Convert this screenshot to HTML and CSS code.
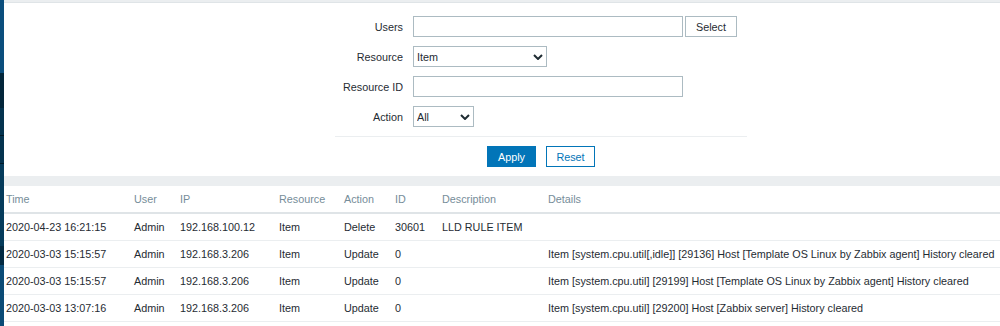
FILE: index.html
```html
<!DOCTYPE html>
<html lang="en">
<head>
    <meta charset="UTF-8">
    <meta name="viewport" content="width=device-width, initial-scale=1.0">
    <title>Audit log</title>
    <link rel="stylesheet" href="styles.css">
</head>
<body>
    <div class="page">
        <!-- visible edge of the collapsed sidebar -->
        <div class="sidebar">
            <div class="sb sb-logo"></div>
            <div class="sb sb-search"></div>
            <div class="sb sb-item"></div>
            <div class="sb sb-item"></div>
            <div class="sb sb-group"></div>
            <div class="sb sb-dark"></div>
            <div class="sb sb-active"></div>
        </div>

        <main class="content">
            <div class="filter-panel">
                <form class="filter">
                    <div class="filter-grid">
                        <label class="flabel">Users</label>
                        <div class="field">
                            <input type="text" class="text-box wide">
                            <button type="button" class="btn-alt">Select</button>
                        </div>

                        <label class="flabel">Resource</label>
                        <div class="field">
                            <span class="select-wrap res">
                                <select class="select-box">
                                    <option>Item</option>
                                </select>
                                <svg class="chevron" viewBox="0 0 10 6" width="10" height="6"><path d="M1 1 L5 5 L9 1" fill="none" stroke="#1f2c33" stroke-width="2"/></svg>
                            </span>
                        </div>

                        <label class="flabel">Resource ID</label>
                        <div class="field">
                            <input type="text" class="text-box wide">
                        </div>

                        <label class="flabel">Action</label>
                        <div class="field">
                            <span class="select-wrap act">
                                <select class="select-box">
                                    <option>All</option>
                                </select>
                                <svg class="chevron" viewBox="0 0 10 6" width="10" height="6"><path d="M1 1 L5 5 L9 1" fill="none" stroke="#1f2c33" stroke-width="2"/></svg>
                            </span>
                        </div>
                    </div>

                    <div class="filter-buttons">
                        <button type="button" class="btn-apply">Apply</button>
                        <button type="button" class="btn-reset">Reset</button>
                    </div>
                </form>
            </div>

            <div class="list-panel">
                <table class="list-table">
                    <colgroup>
                        <col class="c-time">
                        <col class="c-user">
                        <col class="c-ip">
                        <col class="c-res">
                        <col class="c-action">
                        <col class="c-id">
                        <col class="c-desc">
                        <col>
                    </colgroup>
                    <thead>
                        <tr>
                            <th>Time</th>
                            <th>User</th>
                            <th>IP</th>
                            <th>Resource</th>
                            <th>Action</th>
                            <th>ID</th>
                            <th>Description</th>
                            <th>Details</th>
                        </tr>
                    </thead>
                    <tbody>
                        <tr>
                            <td>2020-04-23 16:21:15</td>
                            <td>Admin</td>
                            <td>192.168.100.12</td>
                            <td>Item</td>
                            <td>Delete</td>
                            <td>30601</td>
                            <td>LLD RULE ITEM</td>
                            <td></td>
                        </tr>
                        <tr>
                            <td>2020-03-03 15:15:57</td>
                            <td>Admin</td>
                            <td>192.168.3.206</td>
                            <td>Item</td>
                            <td>Update</td>
                            <td>0</td>
                            <td></td>
                            <td>Item [system.cpu.util[,idle]] [29136] Host [Template OS Linux by Zabbix agent] History cleared</td>
                        </tr>
                        <tr>
                            <td>2020-03-03 15:15:57</td>
                            <td>Admin</td>
                            <td>192.168.3.206</td>
                            <td>Item</td>
                            <td>Update</td>
                            <td>0</td>
                            <td></td>
                            <td>Item [system.cpu.util] [29199] Host [Template OS Linux by Zabbix agent] History cleared</td>
                        </tr>
                        <tr>
                            <td>2020-03-03 13:07:16</td>
                            <td>Admin</td>
                            <td>192.168.3.206</td>
                            <td>Item</td>
                            <td>Update</td>
                            <td>0</td>
                            <td></td>
                            <td>Item [system.cpu.util] [29200] Host [Zabbix server] History cleared</td>
                        </tr>
                    </tbody>
                </table>
            </div>
        </main>
    </div>
</body>
</html>
```

FILE: styles.css
```css
:root {
    --bg: #ebeef0;
    --panel: #ffffff;
    --text: #1f2c33;
    --muted: #768d99;
    --border: #acbbc2;
    --line: #ebeef0;
    --line-strong: #dfe4e7;
    --blue: #0275b8;
}

* {
    box-sizing: border-box;
}

body {
    margin: 0;
    font-family: "Liberation Sans", Arial, sans-serif;
    font-size: 10.8px;
    color: var(--text);
    background: var(--bg);
}

.page {
    display: flex;
    width: 1000px;
    height: 326px;
    overflow: hidden;
}

/* sidebar edge */
.sidebar {
    width: 4px;
    flex-shrink: 0;
    display: flex;
    flex-direction: column;
    background: #0a4a74;
}

.sb-logo { height: 73px; background: #0b4e7d; }
.sb-search { height: 35px; background: #03263a; }
.sb-item { height: 28px; background: #04334f; border-bottom: 1px solid #011a28; }
.sb-group { height: 82px; background: #053b5b; }
.sb-dark { height: 19px; background: #032a42; }
.sb-active { flex: 1; background: #0b4b76; }

.content {
    flex: 1;
    display: flex;
    flex-direction: column;
    padding-top: 2px;
}

/* filter */
.filter-panel {
    background: var(--panel);
    border-top: 1px solid var(--line-strong);
    padding: 13px 0 9px;
    margin-bottom: 10px;
}

.filter {
    width: 412px;
    margin-left: 331px;
}

.filter-grid {
    display: grid;
    grid-template-columns: 78px 1fr;
    row-gap: 9px;
    align-items: center;
}

.flabel {
    text-align: right;
    padding-right: 10px;
    line-height: 20px;
}

.field {
    display: flex;
    gap: 2px;
    height: 21px;
}

.text-box {
    height: 21px;
    border: 1px solid var(--border);
    background: #fff;
    font: inherit;
    padding: 0 3px;
    margin: 0;
}

.wide {
    width: 270px;
}

.btn-alt {
    width: 52px;
    height: 21px;
    margin: 0;
    border: 1px solid var(--border);
    background: #fff;
    color: var(--text);
    font: inherit;
    padding: 0;
}

.select-wrap {
    position: relative;
    display: block;
    height: 21px;
}

.select-wrap.res { width: 134px; }
.select-wrap.act { width: 61px; }

.select-box {
    appearance: none;
    -webkit-appearance: none;
    width: 100%;
    height: 21px;
    margin: 0;
    padding: 0 16px 0 3px;
    border: 1px solid var(--border);
    border-radius: 0;
    background: #fff;
    color: var(--text);
    font: inherit;
}

.chevron {
    position: absolute;
    right: 4px;
    top: 8px;
    pointer-events: none;
}

.filter-buttons {
    display: flex;
    justify-content: center;
    gap: 10px;
    margin-top: 9px;
    padding-top: 9px;
    border-top: 1px solid var(--line);
}

.btn-apply,
.btn-reset {
    width: 49px;
    height: 21px;
    margin: 0;
    padding: 0;
    font: inherit;
    border: 1px solid var(--blue);
}

.btn-apply {
    background: var(--blue);
    color: #fff;
}

.btn-reset {
    background: #fff;
    color: var(--blue);
}

/* list */
.list-panel {
    flex: 1;
    background: var(--panel);
}

.list-table {
    width: 996px;
    table-layout: fixed;
    border-collapse: separate;
    border-spacing: 0;
}

.c-time { width: 128px; }
.c-user { width: 46px; }
.c-ip { width: 99px; }
.c-res { width: 65px; }
.c-action { width: 51px; }
.c-id { width: 47px; }
.c-desc { width: 106px; }

.list-table th,
.list-table td {
    padding: 0 0 0 2px;
    text-align: left;
    white-space: nowrap;
    overflow: hidden;
}

.list-table th {
    font-weight: normal;
    color: var(--muted);
    line-height: 26px;
    border-bottom: 2px solid var(--line-strong);
}

.list-table td {
    line-height: 26px;
    border-bottom: 1px solid var(--line);
}
```
